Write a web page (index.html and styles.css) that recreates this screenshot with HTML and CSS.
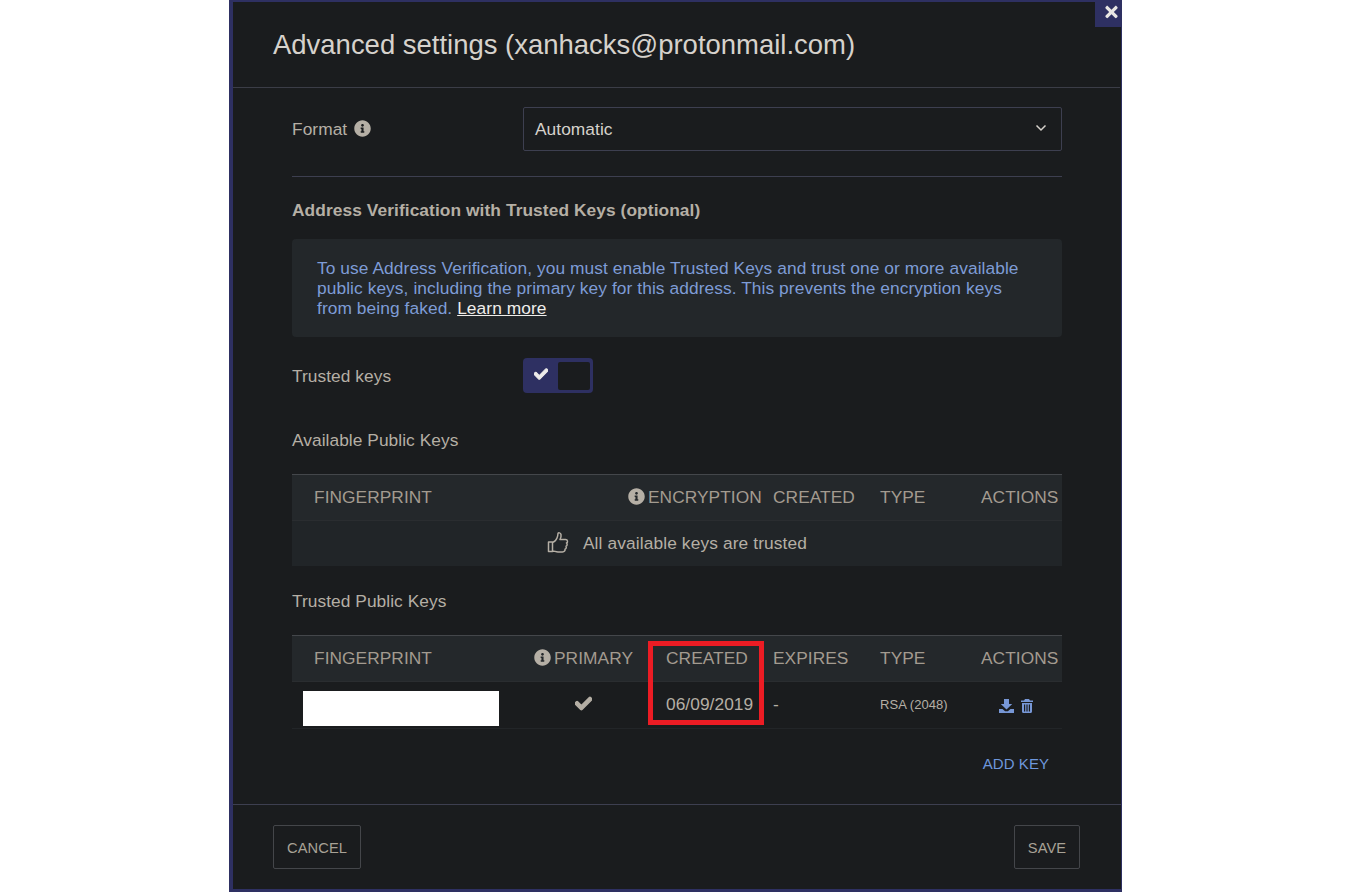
FILE: index.html
```html
<!DOCTYPE html>
<html>
<head>
    <meta charset="utf-8">
    <title>Advanced settings</title>
    <link rel="stylesheet" href="styles.css">
</head>
<body>
    <svg class="sprite">
        <symbol id="i-info" viewBox="0 0 512 512"><path d="M256 8C119.043 8 8 119.083 8 256c0 136.997 111.043 248 248 248s248-111.003 248-248C504 119.083 392.957 8 256 8zm0 110c23.196 0 42 18.804 42 42s-18.804 42-42 42-42-18.804-42-42 18.804-42 42-42zm56 254c0 6.627-5.373 12-12 12h-88c-6.627 0-12-5.373-12-12v-24c0-6.627 5.373-12 12-12h12v-64h-12c-6.627 0-12-5.373-12-12v-24c0-6.627 5.373-12 12-12h64c6.627 0 12 5.373 12 12v100h12c6.627 0 12 5.373 12 12v24z"/></symbol>
        <symbol id="i-check" viewBox="0 0 512 512"><path d="M173.898 439.404l-166.4-166.4c-9.997-9.997-9.997-26.206 0-36.204l36.203-36.204c9.997-9.998 26.207-9.998 36.204 0L192 312.69 432.095 72.596c9.997-9.997 26.207-9.997 36.204 0l36.203 36.204c9.997 9.997 9.997 26.206 0 36.204l-294.4 294.401c-9.998 9.997-26.207 9.997-36.204-.001z"/></symbol>
        <symbol id="i-times" viewBox="0 0 352 512"><path d="M242.72 256l100.07-100.07c12.28-12.28 12.28-32.19 0-44.48l-22.24-22.24c-12.28-12.28-32.19-12.28-44.48 0L176 189.28 75.93 89.21c-12.28-12.28-32.19-12.28-44.48 0L9.21 111.45c-12.28 12.28-12.28 32.19 0 44.48L109.28 256 9.21 356.07c-12.28 12.28-12.28 32.19 0 44.48l22.24 22.24c12.28 12.28 32.2 12.28 44.48 0L176 322.72l100.07 100.07c12.28 12.28 32.2 12.28 44.48 0l22.24-22.24c12.28-12.28 12.28-32.19 0-44.48L242.72 256z"/></symbol>
    </svg>

    <div class="modal">
        <button class="modal-close"><svg class="icon-close"><use href="#i-times"/></svg></button>

        <div class="modal-header">Advanced settings (xanhacks@protonmail.com)</div>

        <div class="modal-body">
            <div class="format-row">
                <div class="format-label">Format <svg class="icon-info"><use href="#i-info"/></svg></div>
                <div class="select">
                    Automatic
                    <svg class="chevron" viewBox="0 0 12 8"><path d="M1.5 1.5 6 6l4.5-4.5"/></svg>
                </div>
            </div>

            <hr class="divider">

            <div class="section-heading">Address Verification with Trusted Keys (optional)</div>

            <div class="alert">To use Address Verification, you must enable Trusted Keys and trust one or more available public keys, including the primary key for this address. This prevents the encryption keys from being faked. <a href="#">Learn more</a></div>

            <div class="toggle-row">
                <div class="toggle-label">Trusted keys</div>
                <div class="toggle">
                    <svg class="toggle-check"><use href="#i-check"/></svg>
                    <div class="toggle-knob"></div>
                </div>
            </div>

            <div class="table-title first">Available Public Keys</div>
            <table class="keys">
                <colgroup><col class="w325"><col class="w145"><col class="w107"><col class="w101"><col class="w92"></colgroup>
                <thead>
                    <tr>
                        <th class="fingerprint">FINGERPRINT</th>
                        <th><svg class="icon-info th-info"><use href="#i-info"/></svg>ENCRYPTION</th>
                        <th>CREATED</th>
                        <th>TYPE</th>
                        <th>ACTIONS</th>
                    </tr>
                </thead>
                <tbody>
                    <tr class="empty">
                        <td colspan="5">
                            <svg class="icon-thumb" viewBox="0 0 22 23"><path d="M1.500 11h4v9.500h-4zM5.500 11.500c2-.5 3.500-2 4.500-4.500.6-1.600.9-3 1-4.500 0-1 2.600-1 3 1 .3 1.700-.3 3.700-1 5h5.500c2.500 0 2.500 3 1 3.500 1 1 .8 2.700-.5 3.200.6 1.100.2 2.500-1 2.900.3 1.600-.6 2.800-2.500 2.800H11c-2 0-3.500-.8-5.500-1"/></svg>
                            All available keys are trusted
                        </td>
                    </tr>
                </tbody>
            </table>

            <div class="table-title">Trusted Public Keys</div>
            <div class="table-wrap">
                <table class="keys">
                    <colgroup><col class="w231"><col class="w132"><col class="w107"><col class="w107"><col class="w101"><col class="w92"></colgroup>
                    <thead>
                        <tr>
                            <th class="fingerprint">FINGERPRINT</th>
                            <th><svg class="icon-info th-info"><use href="#i-info"/></svg>PRIMARY</th>
                            <th>CREATED</th>
                            <th>EXPIRES</th>
                            <th>TYPE</th>
                            <th>ACTIONS</th>
                        </tr>
                    </thead>
                    <tbody>
                        <tr class="key">
                            <td class="redacted-cell"><div class="redacted"></div></td>
                            <td class="primary"><svg class="icon-check"><use href="#i-check"/></svg></td>
                            <td>06/09/2019</td>
                            <td>-</td>
                            <td class="small">RSA (2048)</td>
                            <td class="actions">
                                <svg class="icon-action dl" viewBox="0 0 15 14"><path d="M5 0h5v5h3.200L7.500 10.500 1.800 5H5zM0 10h3.500l2.600 2.300h2.800L11.500 10H15v4H0z"/></svg>
                                <svg class="icon-action tr" viewBox="0 0 12 14"><path fill-rule="evenodd" d="M4 0h4l1 1.500h3v1.500H0V1.500h3zM1 4h10v8.500c0 .8-.6 1.500-1.400 1.500H2.400C1.600 14 1 13.300 1 12.500zm2 1.500v7h1.200v-7zm2.400 0v7h1.200v-7zm2.400 0v7H9v-7z"/></svg>
                            </td>
                        </tr>
                    </tbody>
                </table>
                <div class="highlight"></div>
            </div>

            <div class="add-key"><a href="#">ADD KEY</a></div>
        </div>

        <div class="modal-footer">
            <button class="btn cancel">CANCEL</button>
            <button class="btn save">SAVE</button>
        </div>
    </div>
</body>
</html>
```

FILE: styles.css
```css
* { box-sizing: border-box; }
html, body { margin: 0; padding: 0; background: #fff; }
body {
  display: flex;
  justify-content: center;
  height: 892px;
  overflow: hidden;
  font-family: "Liberation Sans", Arial, sans-serif;
  font-size: 17.33px;
  letter-spacing: .05px;
  color: #b5afa5;
}
.sprite { display: none; }

.modal {
  position: relative;
  display: flex;
  flex-direction: column;
  width: 893px;
  height: 892px;
  margin-left: 1px;
  background: #1a1c1e;
  border-style: solid;
  border-color: #2e3062;
  border-width: 2px 1px 3px 4px;
}
.modal-close {
  position: absolute;
  top: 0;
  right: -1px;
  display: flex;
  align-items: center;
  justify-content: center;
  width: 27px;
  height: 25px;
  padding: 0 0 5px 5px;
  border: 0;
  background: #2e3062;
}
.icon-close { width: 13px; height: 18px; fill: #e8e6e3; }

.modal-header {
  flex: none;
  height: 86px;
  padding: 24px 40px 0;
  margin-right: 1px;
  border-bottom: 1px solid #3b3d47;
  font-size: 27.47px;
  letter-spacing: 0;
  line-height: 37px;
  color: #d6d2cc;
}

.modal-body { flex: 1; padding: 19px 59px 0; }

.format-row { display: flex; align-items: center; height: 44px; }
.format-label { width: 231px; }
.icon-info { width: 17px; height: 17px; fill: #b5afa5; vertical-align: -2px; margin-left: 2px; }
.th-info { margin: 0 3px 0 0; }
.select {
  position: relative;
  display: flex;
  align-items: center;
  justify-content: space-between;
  width: 539px;
  height: 44px;
  padding: 0 14px 0 11px;
  border: 1px solid #3d3f50;
  border-radius: 2px;
  color: #d6d2cc;
}
.chevron { width: 12px; height: 8px; margin-top: -3px; fill: none; stroke: #d6d2cc; stroke-width: 1.500; }

.divider { height: 1px; margin: 25px 0 0; border: 0; background: #3d3f50; }

.section-heading {
  margin-top: 23px;
  height: 20px;
  font-weight: bold;
  line-height: 20px;
  letter-spacing: .08px;
}

.alert {
  height: 98px;
  margin-top: 19px;
  padding: 19px 40px 19px 25px;
  background: #23272a;
  border-radius: 4px;
  line-height: 20px;
  letter-spacing: .08px;
  color: #7e9cd6;
}
.alert a { color: #f0eeeb; }

.toggle-row { display: flex; align-items: center; height: 35px; margin-top: 21px; }
.toggle-label { width: 231px; padding-top: 1px; }
.toggle {
  display: flex;
  align-items: center;
  justify-content: space-between;
  width: 70px;
  height: 35px;
  padding: 0 3px 0 11px;
  background: #2e3062;
  border-radius: 4px;
}
.toggle-check { width: 14px; height: 14px; margin-top: -3px; fill: #eeeceb; stroke: #eeeceb; stroke-width: 40px; }
.toggle-knob { width: 32px; height: 28px; background: #1a1c1e; border-radius: 2px; }

.table-title { height: 20px; margin-top: 25px; margin-bottom: 24px; line-height: 20px; }
.table-title.first { margin-top: 37px; }

.keys { width: 770px; table-layout: fixed; border-collapse: separate; border-spacing: 0; }
.w325 { width: 325px; }
.w231 { width: 231px; }
.w145 { width: 145px; }
.w132 { width: 132px; }
.w107 { width: 107px; }
.w101 { width: 101px; }
.w92 { width: 92px; }

.keys th {
  height: 46px;
  padding: 0 0 1px 11px;
  background: #24282b;
  border-top: 1px solid #44474b;
  font-weight: normal;
  text-align: left;
  white-space: nowrap;
  color: #a39b90;
}
.keys th.fingerprint { padding-left: 22px; }
.keys td {
  height: 48px;
  padding: 0 0 2px 11px;
  border-top: 1px solid #2a2d30;
  border-bottom: 1px solid #222528;
}
.keys .empty td {
  height: 46px;
  padding: 0 0 2px;
  background: #212528;
  text-align: center;
  letter-spacing: .12px;
  border-bottom: 0;
}
.icon-thumb {
  width: 22px;
  height: 23px;
  margin-right: 10px;
  vertical-align: -5px;
  fill: none;
  stroke: #b5afa5;
  stroke-width: 1.500;
  stroke-linejoin: round;
}

.table-wrap { position: relative; }
.keys td.redacted-cell { padding-top: 9px; vertical-align: top; }
.redacted { width: 196px; height: 35px; background: #fff; }
.keys td.primary { padding: 0 22px 0 11px; text-align: center; }
.icon-check { width: 17px; height: 17px; margin-top: -4px; fill: #b5afa5; stroke: #b5afa5; stroke-width: 40px; vertical-align: middle; }
.keys td.small { font-size: 13px; }
.keys td.actions { padding: 0 0 0 29px; }
.icon-action { fill: #7797d6; vertical-align: middle; }
.icon-action.dl { width: 15px; height: 14px; }
.icon-action.tr { width: 12px; height: 14px; margin-left: 2px; }
.highlight {
  position: absolute;
  left: 356px;
  top: 6px;
  width: 116px;
  height: 84px;
  border: 5px solid #ec1c24;
}

.add-key {
  height: 20px;
  margin-top: 25px;
  padding-right: 13px;
  text-align: right;
  font-size: 15px;
  line-height: 20px;
}
.add-key a { color: #6e97dc; text-decoration: none; }

.modal-footer {
  flex: none;
  display: flex;
  justify-content: space-between;
  height: 85px;
  padding: 20px 41px 0 40px;
  border-top: 1px solid #3d3f50;
}
.btn {
  height: 44px;
  padding: 2px 0 0;
  background: transparent;
  border: 1px solid #44464a;
  border-radius: 2px;
  font-family: inherit;
  font-size: 14.67px;
  letter-spacing: .1px;
  color: #a8a296;
}
.btn.cancel { width: 88px; }
.btn.save { width: 66px; }
```
